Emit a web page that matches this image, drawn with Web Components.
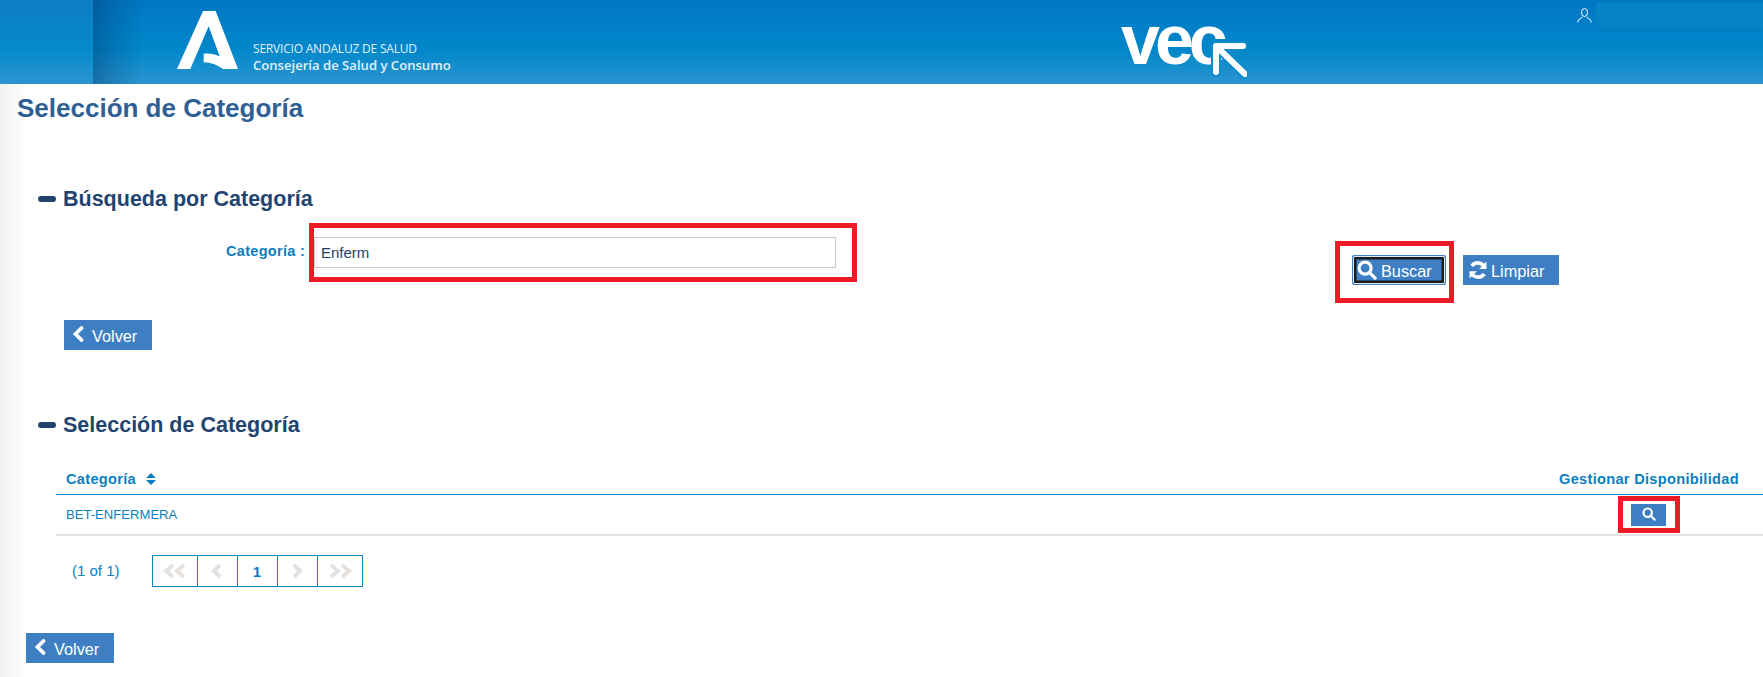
<!DOCTYPE html>
<html lang="es"><head><meta charset="utf-8"><title>Selección de Categoría</title>
<style>
html,body{margin:0;padding:0;background:#fff}
body{font-family:"Liberation Sans",Arial,sans-serif;width:1763px;height:677px;overflow:hidden;position:relative}
</style></head><body>
<template id="t-header"><style>
:host{display:flex;height:84px;position:relative;background:linear-gradient(180deg,#0176c3 0,#0087ca 58%,#2b95d0 100%);color:#fff}
.left{width:93px;flex:none;background:linear-gradient(180deg,rgba(255,255,255,.05),rgba(255,255,255,0))}
.shade{width:50px;background:linear-gradient(90deg,rgba(0,50,100,.38),rgba(0,50,100,.2) 40%,rgba(0,70,130,0));flex:none}
.logo{flex:none;margin:11px 0 0 34px;width:61px;height:58px}
.txt{flex:none;width:199px;margin:41px 0 0 15px;font-family:"Open Sans",sans-serif;color:#e2f0f9;font-weight:600;white-space:nowrap}
.l1{font-size:12px;line-height:16px;letter-spacing:-.2px;font-weight:400}
.l2{font-size:13.100px;line-height:17px}
.vec{flex:none;margin:10px 0 0 670px;position:relative;width:125px;height:70px}
.vec b{position:absolute;left:-1px;top:-9px;font:700 70px/78px "Liberation Sans",sans-serif;letter-spacing:-5px;color:#fff}
.vec svg{position:absolute;left:0;top:0}
.user{position:absolute;left:1577px;top:8px}
.box{position:absolute;left:1596px;top:2px;right:0;height:25px;background:#0484c5}
</style>
<div class="left"></div><div class="shade"></div>
<svg class="logo" viewBox="112 34 183 174"><path fill="#fff" d="M190 34H228L295 208H250C235 198 215 188 192 188V162C210 160 225 163 240 170L207 80L152 208H112Z"/></svg>
<div class="txt"><div class="l1">SERVICIO ANDALUZ DE SALUD</div><div class="l2">Consejería de Salud y Consumo</div></div>
<div class="vec"><b>vec</b><svg width="125" height="70"><path d="M94 36H121M94 36V62M96 38L123 64" fill="none" stroke="#0a8acb" stroke-width="10" stroke-linecap="round"/><path d="M94 36H121M94 36V62M96 38L123 64" fill="none" stroke="#fff" stroke-width="6" stroke-linecap="round"/></svg></div>
<svg class="user" width="15" height="15" viewBox="0 0 15 15" fill="none" stroke="#fff"><ellipse cx="7.500" cy="4.500" rx="3" ry="4"/><path d="M5.500 9 1 12.500V14.500M9.500 9 14 12.500V14.500"/></svg>
<div class="box"></div>
</template>

<template id="t-section"><style>
:host{display:block}
h2{margin:0;font:700 21.500px/24px "Liberation Sans",sans-serif;color:#1f4470;display:flex;align-items:center;gap:7px;padding-left:38px}
h2 i{width:18px;height:6px;border-radius:3px;background:#1f4470;display:block}
</style><h2><i></i><span><slot name="title"></slot></span></h2><slot></slot></template>

<template id="t-btn"><style>
:host{display:inline-flex;align-items:center;justify-content:center;gap:4px;height:30px;box-sizing:border-box;padding-top:2px;background:#3e7fc4;color:#fff;font:16.300px "Liberation Sans",sans-serif;white-space:nowrap;position:relative}
:host([focus]){box-shadow:inset 0 0 0 1px #3e7fc4,inset 0 0 0 2px #dfe9f4,inset 0 0 0 4.500px #1b1b1b;border-radius:3px}
</style><slot></slot></template>

<template id="t-mark"><style>
:host{display:block;position:absolute;border:5px solid #ed1c24;box-sizing:border-box;pointer-events:none}
</style></template>

<template id="t-pager"><style>
:host{display:flex;align-items:center;color:#0a80c0;font:15px "Liberation Sans",sans-serif}
.t{margin-top:-1px}
.c{margin-left:32px;display:flex;border:1px solid #0a83c2;height:30px}
.c span{display:flex;align-items:center;justify-content:center;width:39px;border-left:1px solid #0a83c2;font-weight:700}
.c span:first-child{border-left:0;width:44px}
.c span:last-child{width:44px}
path{fill:none;stroke:#e4e1de;stroke-width:4}
</style><span class="t">(1 of 1)</span><div class="c">
<span><svg width="26" height="16" viewBox="0 0 26 16"><path d="M11 2 4 8l7 6M22 2l-7 6 7 6"/></svg></span>
<span><svg width="12" height="16" viewBox="0 0 12 16"><path d="M9 2 3 8l6 6"/></svg></span>
<span>1</span>
<span><svg width="12" height="16" viewBox="0 0 12 16"><path d="m3 2 6 6-6 6"/></svg></span>
<span><svg width="26" height="16" viewBox="0 0 26 16"><path d="m4 2 7 6-7 6M15 2l7 6-7 6"/></svg></span>
</div></template>

<script>
for (const [n,t] of [['app-header','t-header'],['app-section','t-section'],['app-btn','t-btn'],['app-mark','t-mark'],['app-pager','t-pager']]) {
  customElements.define(n,class extends HTMLElement{constructor(){super();this.attachShadow({mode:'open'}).append(document.getElementById(t).content.cloneNode(true))}});
}
const search=s=>`<svg width="${s}" height="${s}" viewBox="0 0 16 16" fill="none" stroke="#fff" stroke-width="2.500" stroke-linecap="round" style="display:block;flex:none;margin-top:-2px"><circle cx="6.500" cy="6.500" r="4.800"/><path d="m10.500 10.500 4 4"/></svg>`;
const chev=`<svg width="14" height="16" viewBox="0 0 14 16" fill="none" stroke="#fff" stroke-width="3.800" stroke-linecap="round" style="display:block;flex:none;margin-top:-5px"><path d="M9.500 2 3.500 8l6 6"/></svg>`;
customElements.define('app-page',class extends HTMLElement{constructor(){super();this.attachShadow({mode:'open'}).innerHTML=`<style>
:host{display:block;position:relative;height:593px;background:linear-gradient(90deg,#f2f2f2 0,#fcfcfc 24px,#fff 25px)}
h1{margin:0;padding:10px 0 0 17px;font:700 26px/28px "Liberation Sans",sans-serif;color:#2f5f95}
.s1{margin-top:65px}
.form{display:flex;position:relative;height:83px;margin-top:26px}
.lab{position:absolute;left:226px;top:6px;font:700 14.500px/16px "Liberation Sans",sans-serif;color:#0a7fc0;letter-spacing:.3px;white-space:nowrap}
.inp{position:absolute;left:314px;top:0;width:522px;height:31px;box-sizing:border-box;border:1px solid #c8c8c8;font:15px/30px "Liberation Sans",sans-serif;color:#1f3f6b;padding-left:6px}
.btns{position:absolute;left:1352px;top:18px;display:flex;gap:17px}
.btns app-btn{justify-content:flex-start}
.v{justify-content:flex-start;padding-left:8px;gap:6px;width:88px}
.v1{margin-left:64px}
.s2{margin-top:63px}
table{border-collapse:collapse;margin:22px 0 0 56px;width:1707px;font-family:"Liberation Sans",sans-serif;color:#0a7fc0}
th{height:35px;border-bottom:1px solid #0083c1;font:700 14.600px/16px "Liberation Sans",sans-serif;letter-spacing:.3px;padding:5px 0 0 10px;text-align:left;box-sizing:border-box}
th svg{margin-left:6px;vertical-align:-1px}
td{height:41px;border-bottom:2px solid #e2e2e2;padding:1px 0 0 10px;font-size:13.100px;box-sizing:border-box}
.r{width:204px;padding-left:0}
.mini{width:35px;height:22px;margin-left:72px;display:flex;padding-top:0}
app-pager{margin:19px 0 0 72px}
.v2{position:absolute;left:26px;top:549px}
</style>
<h1>Selección de Categoría</h1>
<app-section class="s1"><span slot="title">Búsqueda por Categoría</span>
 <div class="form"><span class="lab">Categoría :</span><div class="inp">Enferm</div>
 <div class="btns"><app-btn focus style="width:94px;padding-left:5px">${search(20)}Buscar</app-btn><app-btn style="width:96px;padding-left:6px;gap:4px"><svg width="18" height="18" viewBox="1 1 16 16" fill="none" stroke="#fff" stroke-width="3.200" style="display:block;flex:none;margin-top:-2px"><path d="M15 7A6.500 6.500 0 0 0 3.500 5.500M3 11a6.500 6.500 0 0 0 11.500 1.500"/><path fill="#fff" stroke="none" d="M16.500 1.500V8H10ZM1.500 16.500V10H8Z"/></svg>Limpiar</app-btn></div></div>
 <app-btn class="v v1">${chev}Volver</app-btn>
</app-section>
<app-section class="s2"><span slot="title">Selección de Categoría</span>
<table><tr><th>Categoría <svg width="10" height="12" viewBox="0 0 10 12" fill="#0a7fc0"><path d="M5 0 10 5H0ZM0 7H10L5 12Z"/></svg></th><th class="r">Gestionar Disponibilidad</th></tr>
<tr><td>BET-ENFERMERA</td><td class="r"><app-btn class="mini">${search(14)}</app-btn></td></tr></table>
<app-pager></app-pager></app-section>
<app-btn class="v v2">${chev}Volver</app-btn>
<app-mark style="left:309px;top:139px;width:548px;height:59px"></app-mark>
<app-mark style="left:1335px;top:157px;width:119px;height:62px"></app-mark>
<app-mark style="left:1618px;top:412px;width:62px;height:37px"></app-mark>`}});
</script>
<app-header></app-header>
<app-page></app-page>
</body></html>
